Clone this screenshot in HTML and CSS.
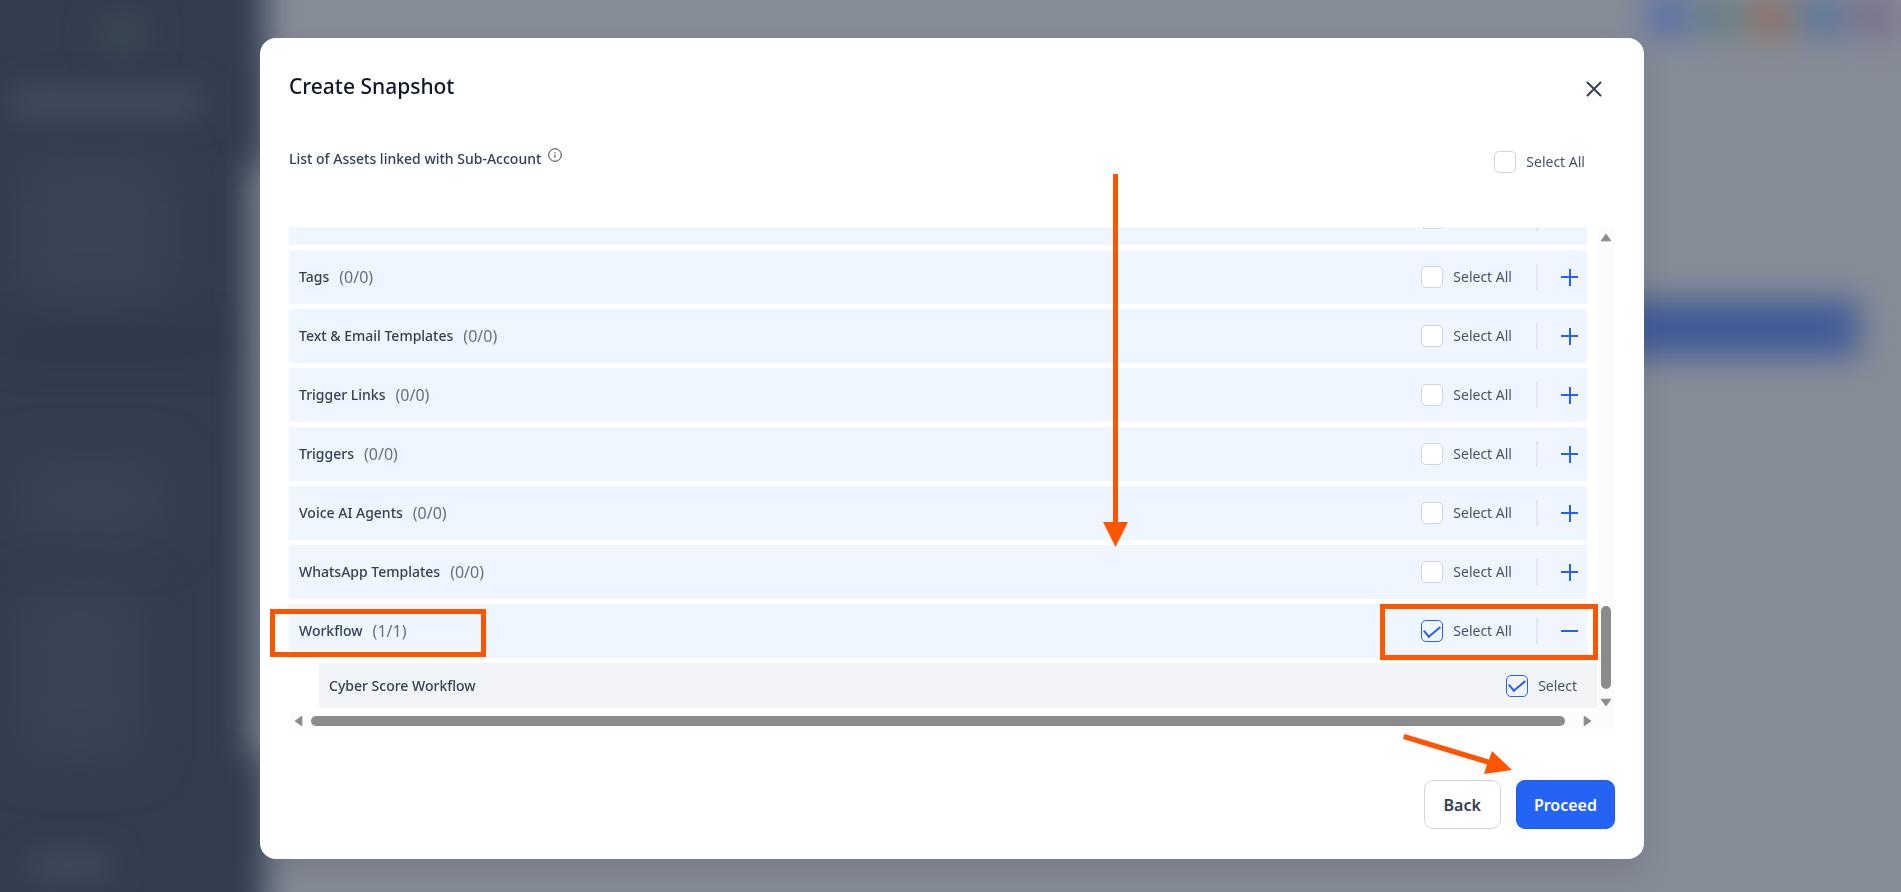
FILE: index.html
```html
<!DOCTYPE html>
<html lang="en">

<head>
    <meta charset="UTF-8">
    <meta name="viewport" content="width=device-width, initial-scale=1.0">
    <title>Create Snapshot</title>
    <link rel="stylesheet" href="styles.css">
</head>

<body>

    <!-- blurred page behind the dialog -->
    <div class="backdrop">
        <div class="blur sidebar"></div>
        <div class="blur panel"></div>
        <div class="blur logo"></div>
        <div class="blur account"></div>
        <div class="blur menu menu1"></div>
        <div class="blur menu menu2"></div>
        <div class="blur menu menu3"></div>
        <div class="blur active"></div>
        <div class="blur chat"></div>
        <div class="blur tools">
            <i class="blue"></i>
            <i class="green"></i>
            <i class="orange"></i>
            <i class="sky"></i>
            <i class="purple"></i>
        </div>
        <div class="blur banner"></div>
    </div>

    <div class="overlay">
        <div class="modal" role="dialog" aria-labelledby="title">

            <div class="modal-head">
                <h1 id="title">Create Snapshot</h1>
                <button class="close" type="button" aria-label="Close">
                    <svg width="16" height="16" viewBox="0 0 16 16">
                        <path d="M1.5 1.5l13 13M14.5 1.5l-13 13" />
                    </svg>
                </button>
            </div>

            <div class="assets-head">
                <h2>List of Assets linked with Sub-Account
                    <svg class="info" width="14" height="14" viewBox="0 0 14 14">
                        <circle cx="7" cy="7" r="6.3" />
                        <path d="M7 6.4v3.4M7 4v1" />
                    </svg>
                </h2>
                <label class="check"><input type="checkbox">Select All</label>
            </div>

            <div class="scroller">
                <div class="list">
                    <div class="row">
                        <span class="name">Surveys</span><span class="count">(0/0)</span>
                        <label class="check"><input type="checkbox">Select All</label>
                        <button class="toggle" type="button" aria-label="Expand"></button>
                    </div>
                    <div class="row">
                        <span class="name">Tags</span><span class="count">(0/0)</span>
                        <label class="check"><input type="checkbox">Select All</label>
                        <button class="toggle" type="button" aria-label="Expand"></button>
                    </div>
                    <div class="row">
                        <span class="name">Text &amp; Email Templates</span><span class="count">(0/0)</span>
                        <label class="check"><input type="checkbox">Select All</label>
                        <button class="toggle" type="button" aria-label="Expand"></button>
                    </div>
                    <div class="row">
                        <span class="name">Trigger Links</span><span class="count">(0/0)</span>
                        <label class="check"><input type="checkbox">Select All</label>
                        <button class="toggle" type="button" aria-label="Expand"></button>
                    </div>
                    <div class="row">
                        <span class="name">Triggers</span><span class="count">(0/0)</span>
                        <label class="check"><input type="checkbox">Select All</label>
                        <button class="toggle" type="button" aria-label="Expand"></button>
                    </div>
                    <div class="row">
                        <span class="name">Voice AI Agents</span><span class="count">(0/0)</span>
                        <label class="check"><input type="checkbox">Select All</label>
                        <button class="toggle" type="button" aria-label="Expand"></button>
                    </div>
                    <div class="row">
                        <span class="name">WhatsApp Templates</span><span class="count">(0/0)</span>
                        <label class="check"><input type="checkbox">Select All</label>
                        <button class="toggle" type="button" aria-label="Expand"></button>
                    </div>
                    <div class="row">
                        <span class="name">Workflow</span><span class="count">(1/1)</span>
                        <label class="check"><input type="checkbox" checked>Select All</label>
                        <button class="toggle open" type="button" aria-label="Collapse"></button>
                    </div>
                    <div class="child">
                        <span class="name">Cyber Score Workflow</span>
                        <label class="check"><input type="checkbox" checked>Select</label>
                    </div>
                </div>

                <div class="bar-y">
                    <svg width="12" height="9" viewBox="0 0 12 9"><path d="M6 1.2L10.8 7.8H1.2z" /></svg>
                    <div class="thumb"></div>
                    <svg width="12" height="9" viewBox="0 0 12 9"><path d="M6 7.8L1.2 1.2h9.6z" /></svg>
                </div>
                <div class="bar-x">
                    <svg width="9" height="12" viewBox="0 0 9 12"><path d="M1.2 6L7.8 1.2v9.6z" /></svg>
                    <div class="thumb"></div>
                    <svg width="9" height="12" viewBox="0 0 9 12"><path d="M7.8 6L1.2 10.8V1.2z" /></svg>
                </div>
                <div class="corner"></div>
            </div>

            <div class="modal-foot">
                <button class="btn" type="button">Back</button>
                <button class="btn primary" type="button">Proceed</button>
            </div>

            <!-- marks drawn over the dialog -->
            <div class="mark mark-name"></div>
            <div class="mark mark-select"></div>
            <svg class="arrow arrow-down" width="26" height="373" viewBox="0 0 26 373">
                <path d="M10 0h5v348h10L12.500 373 0 348h10z" />
            </svg>
            <svg class="arrow arrow-proceed" width="110" height="42" viewBox="0 0 110 42">
                <path d="M1.500 0L86 25.500 89 17 109 36 81 40 84 30.500 0 5z" />
            </svg>
        </div>
    </div>

</body>

</html>
```
FILE: styles.css
```css
* {
    box-sizing: border-box;
}

body {
    margin: 0;
    font-family: "Noto Sans", "Open Sans", sans-serif;
    font-size: 14px;
    line-height: 20px;
    color: #344054;
    background: #868c97;
}

h1,
h2 {
    margin: 0;
    font-weight: 500;
}

button {
    font-family: inherit;
    cursor: pointer;
}

/* page behind */
.backdrop {
    position: fixed;
    inset: 0;
    overflow: hidden;
    background: #868c97;
}

.blur {
    position: absolute;
    filter: blur(16px);
}

.sidebar {
    left: -60px;
    top: -60px;
    bottom: -60px;
    width: 325px;
    background: #323d50;
}

.panel {
    left: 250px;
    top: 165px;
    width: 40px;
    height: 590px;
    background: #7d838e;
}

.logo {
    left: 100px;
    top: 15px;
    width: 46px;
    height: 36px;
    background: #3c4b4f;
}

.account {
    left: 10px;
    top: 92px;
    width: 190px;
    height: 22px;
    background: #4a5566;
}

.menu {
    left: 20px;
    background: #394456;
    filter: blur(24px);
}

.menu1 {
    top: 155px;
    width: 150px;
    height: 150px;
}

.menu2 {
    top: 460px;
    width: 145px;
    height: 80px;
}

.menu3 {
    top: 590px;
    width: 120px;
    height: 170px;
}

.active {
    left: 10px;
    top: 328px;
    width: 210px;
    height: 30px;
    background: #30384b;
}

.chat {
    left: 30px;
    top: 855px;
    width: 80px;
    height: 22px;
    background: #465061;
}

.tools {
    right: 4px;
    top: -4px;
    display: flex;
    gap: 8px;
}

.tools i {
    width: 44px;
    height: 42px;
}

.blue {
    background: #5a70a8;
}

.green {
    background: #667f86;
}

.orange {
    background: #8c7266;
}

.sky {
    background: #5c779c;
}

.purple {
    background: #7b708c;
}

.banner {
    right: 42px;
    top: 300px;
    width: 600px;
    height: 56px;
    background: #3f5b98;
}

/* dialog */
.overlay {
    position: relative;
    padding: 38px 257px 33px 260px;
}

.modal {
    position: relative;
    padding: 32px 29px 30px;
    border-radius: 16px;
    background: #fff;
    box-shadow: 0 16px 32px rgba(16, 24, 40, 0.12);
}

.modal-head {
    display: flex;
    justify-content: space-between;
    align-items: center;
    height: 32px;
}

.modal-head h1 {
    font-size: 21px;
    line-height: 32px;
    color: #101828;
}

.close {
    display: flex;
    margin: 5px 13px 0 0;
    padding: 0;
    border: 0;
    background: none;
}

.close path {
    fill: none;
    stroke: #344054;
    stroke-width: 2;
    stroke-linecap: round;
}

.assets-head {
    display: flex;
    justify-content: space-between;
    align-items: flex-start;
    padding: 46px 30px 54px 0;
}

.assets-head h2 {
    font-size: 14px;
    line-height: 20px;
}

.assets-head .check {
    padding-top: 3px;
}

.info {
    margin-left: 3px;
    fill: none;
    stroke: #344054;
    vertical-align: 2px;
}

.check {
    display: flex;
    align-items: center;
    gap: 10px;
    color: #475467;
}

.check input {
    appearance: none;
    width: 22px;
    height: 22px;
    margin: 0;
    border: 1px solid #d0d5dd;
    border-radius: 5px;
    background: #fff;
    display: grid;
    place-items: center;
}

.check input:checked {
    border-color: #2563eb;
    background: #eff4ff;
}

/* tick */
.check input:checked::before {
    content: "";
    width: 14px;
    height: 7px;
    border-left: 2px solid #2563eb;
    border-bottom: 2px solid #2563eb;
    transform: translateY(-2px) rotate(-40deg);
}

.scroller {
    display: grid;
    grid-template-columns: 1fr 18px;
    grid-template-rows: 485px 18px;
}

.list {
    display: flex;
    flex-direction: column;
    justify-content: flex-end;
    gap: 5px;
    overflow: hidden;
    padding-bottom: 4px;
}

.row {
    flex: none;
    display: flex;
    align-items: center;
    height: 54px;
    margin-right: 10px;
    padding: 0 9px 0 10px;
    background: #eff6ff;
}

.name {
    font-weight: 500;
}

.count {
    margin-left: 10px;
    font-size: 16px;
    color: #667085;
}

.row .check,
.child .check {
    margin-left: auto;
}

.toggle {
    width: 42px;
    height: 26px;
    margin-left: 24px;
    padding: 0;
    border: 0;
    border-left: 2px solid #e4e7ec;
    background:
        linear-gradient(#2563eb, #2563eb) right 50% / 17px 2px no-repeat,
        linear-gradient(#2563eb, #2563eb) right 7px top 50% / 2px 17px no-repeat;
}

.toggle.open {
    background: linear-gradient(#2563eb, #2563eb) right 50% / 17px 2px no-repeat;
}

.child {
    flex: none;
    display: flex;
    align-items: center;
    height: 45px;
    margin-left: 30px;
    padding: 0 20px 0 10px;
    background: #f2f4f7;
}

/* scroll bars */
.bar-y,
.bar-x,
.corner {
    background: #fcfcfc;
}

.bar-y {
    display: flex;
    flex-direction: column;
    align-items: center;
    padding: 6px 0 5px;
}

.bar-x {
    display: flex;
    align-items: center;
    padding: 0 5px;
}

.bar-y path,
.bar-x path {
    fill: #8b8b8b;
    stroke: #8b8b8b;
    stroke-linejoin: round;
}

.thumb {
    border-radius: 5px;
    background: #8b8b8b;
}

.bar-y .thumb {
    width: 10px;
    height: 83px;
    margin: auto 0 9px;
}

.bar-x .thumb {
    flex: 1;
    height: 10px;
    margin: 0 18px 0 8px;
}

.modal-foot {
    display: flex;
    justify-content: flex-end;
    gap: 15px;
    padding-top: 50px;
}

.btn {
    height: 49px;
    padding: 0 19px;
    border: 1px solid #d0d5dd;
    border-radius: 9px;
    background: #fff;
    font-size: 16px;
    font-weight: 600;
    color: #344054;
}

.btn.primary {
    padding: 0 17px;
    border-color: #155eef;
    background: #2563f5;
    color: #fff;
}

/* marks */
.mark {
    position: absolute;
    border: 5px solid #ff5500;
}

.mark-name {
    left: 10px;
    top: 571px;
    width: 216px;
    height: 48px;
}

.mark-select {
    right: 46px;
    top: 566px;
    width: 218px;
    height: 56px;
}

.arrow {
    position: absolute;
    fill: #ff5500;
}

.arrow-down {
    right: 515px;
    top: 136px;
}

.arrow-proceed {
    right: 131px;
    top: 696px;
}
```
